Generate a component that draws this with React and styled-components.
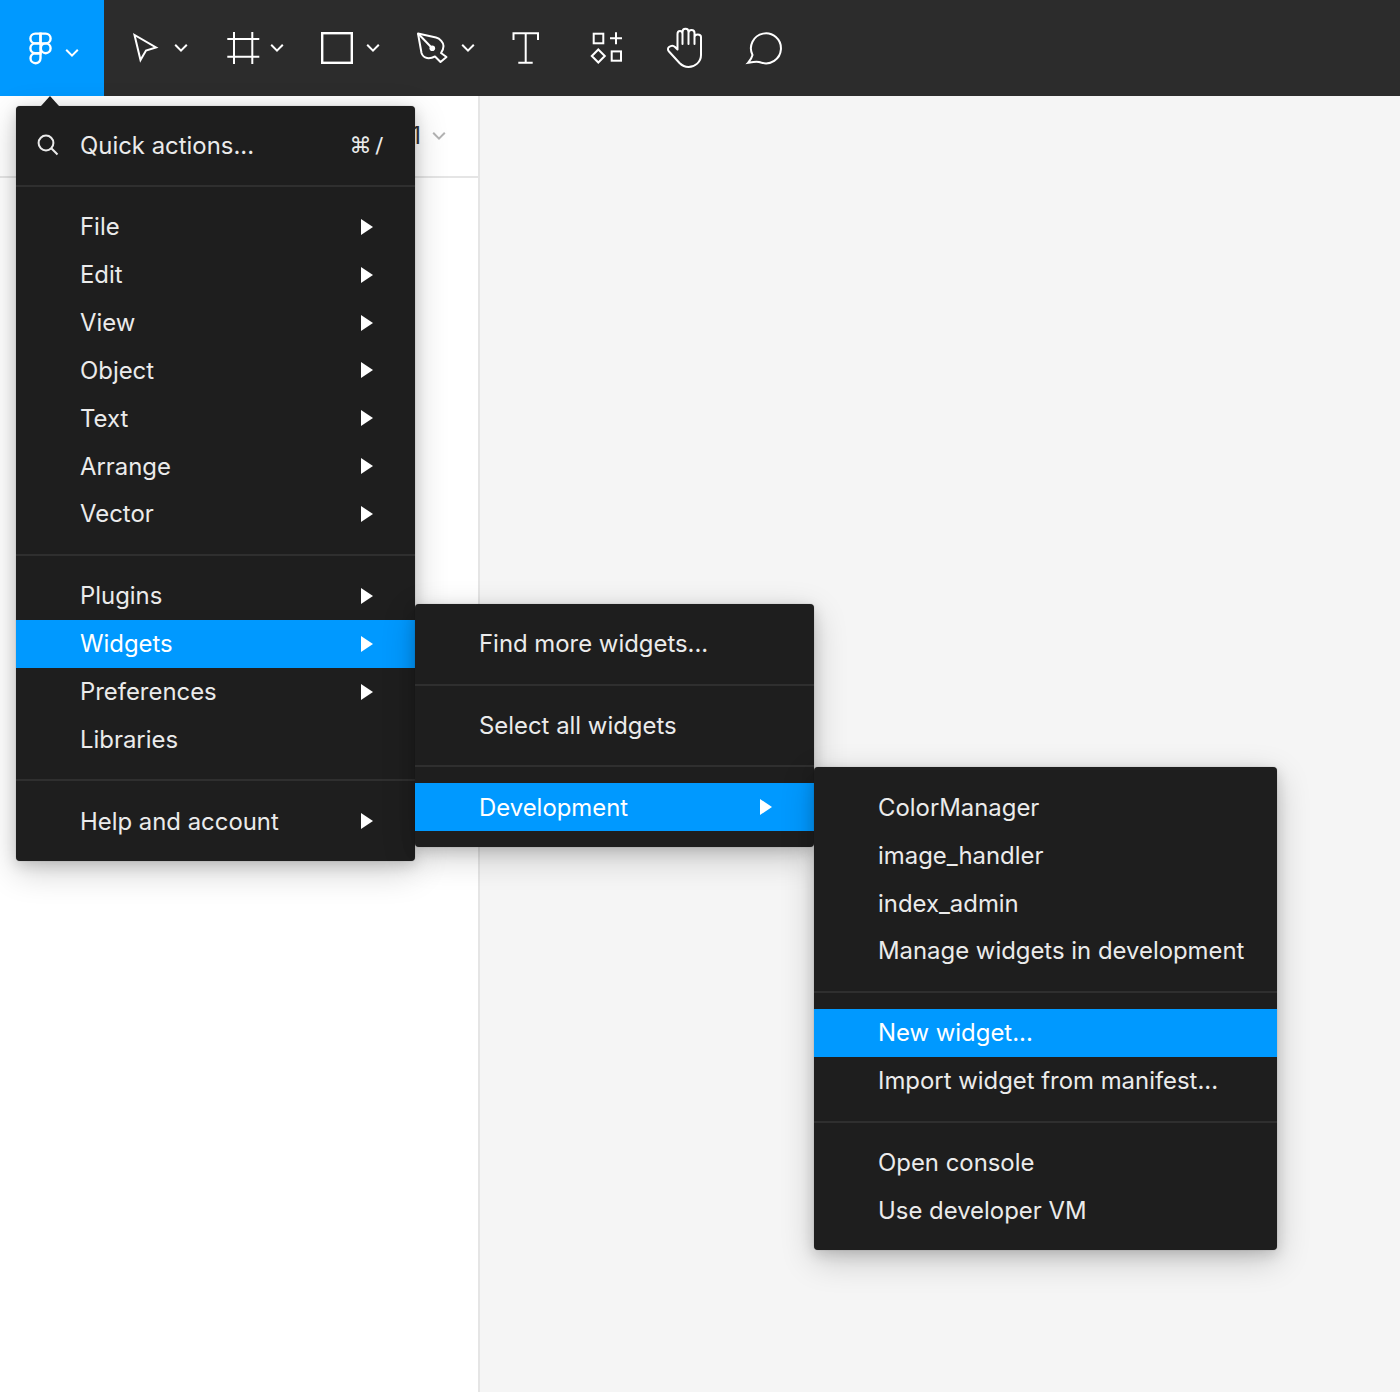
import React from "react";
import styled, { createGlobalStyle } from "styled-components";

const Global = createGlobalStyle`
  html, body { margin: 0; padding: 0; background: #fff; }
  body { font-family: Inter, "DejaVu Sans", sans-serif; -webkit-font-smoothing: antialiased; }
`;

const Page = styled.div`
  position: relative;
  width: 1400px;
  height: 1392px;
  overflow: hidden;
  display: flex;
  flex-direction: column;
`;

const Toolbar = styled.header`
  flex: none;
  height: 95.5px;
  background: #2c2c2c;
  display: flex;
  align-items: center;
`;

const MainButton = styled.div`
  width: 104px;
  height: 100%;
  padding-left: 16px;
  box-sizing: border-box;
  background: #0099ff;
  display: flex;
  align-items: center;
`;

const Tool = styled.div`
  width: ${(p) => (p.$group ? 96 : 80)}px;
  padding-left: 16px;
  box-sizing: border-box;
  display: flex;
  align-items: center;
`;

const ToolIcon = styled.svg`
  flex: none;
  width: 48px;
  height: 48px;
  fill: none;
  stroke: #fff;
  stroke-width: ${(p) => p.$stroke ?? 2};
`;

const ChevronIcon = styled.svg`
  flex: none;
  width: 16px;
  height: 16px;
  margin-left: ${(p) => p.$left ?? 5}px;
  margin-top: ${(p) => p.$top ?? 0}px;
  fill: none;
  stroke: ${(p) => p.$color ?? "#fff"};
  stroke-width: 2;
`;

const Workspace = styled.main`
  flex: 1;
  display: flex;
  min-height: 0;
`;

const SidePanel = styled.aside`
  flex: none;
  width: 478px;
  background: #fff;
  border-right: 2px solid #e5e5e5;
`;

const PanelHeader = styled.div`
  height: 82.5px;
  box-sizing: border-box;
  padding-right: 31px;
  border-bottom: 2px solid #e5e5e5;
  display: flex;
  align-items: center;
  justify-content: flex-end;
  color: #333;
  font-size: 24px;
`;

const Canvas = styled.div`
  flex: 1;
  background: #f5f5f5;
`;

const Menu = styled.div`
  position: absolute;
  width: ${(p) => p.$width}px;
  background: #1e1e1e;
  border-radius: 4px;
  color: #ebebeb;
  font-size: 23.9px;
  box-shadow: 0 4px 14px rgba(0, 0, 0, 0.15), 0 10px 34px rgba(0, 0, 0, 0.2), 0 0 1px rgba(0, 0, 0, 0.4);
`;

const MainMenu = styled(Menu)`
  left: 16px;
  top: 105.5px;
  &::before {
    content: "";
    position: absolute;
    left: 24.5px;
    top: -9.5px;
    border-left: 9.5px solid transparent;
    border-right: 9.5px solid transparent;
    border-bottom: 10px solid #1e1e1e;
  }
`;

const SubMenu = styled(Menu)`
  left: 100%;
  top: -16px;
  z-index: 1;
`;

const QuickRow = styled.div`
  height: 79.5px;
  padding: 0 32px 0 20px;
  display: flex;
  align-items: center;
`;

const SearchIcon = styled.svg`
  flex: none;
  width: 24px;
  height: 24px;
  margin-right: 20px;
  fill: none;
  stroke: #ebebeb;
  stroke-width: 2;
`;

const Shortcut = styled.span`
  margin-left: auto;
  font-family: "DejaVu Sans", Inter, sans-serif;
  font-size: 22px;
  word-spacing: -3px;
`;

const Section = styled.div`
  padding: 16px 0;
  border-top: ${(p) => (p.$first ? "none" : "2px solid #2f2f2f")};
`;

const Row = styled.div`
  position: relative;
  height: 47.85px;
  padding: 0 42px 0 64px;
  display: flex;
  align-items: center;
  justify-content: space-between;
  white-space: nowrap;
  background: ${(p) => (p.$active ? "#0099ff" : "transparent")};
  color: ${(p) => (p.$active ? "#fff" : "inherit")};
`;

const Arrow = styled.span`
  flex: none;
  width: 0;
  height: 0;
  border-left: 12px solid #fff;
  border-top: 8px solid transparent;
  border-bottom: 8px solid transparent;
`;

const Chevron = (props) => (
  <ChevronIcon viewBox="0 0 16 16" {...props}>
    <path d="M2.2 4.8 L8 10.6 L13.8 4.8" />
  </ChevronIcon>
);

const FigmaLogo = () => (
  <ToolIcon viewBox="0 0 48 48" $stroke={2.4}>
    <path d="M24.5 9.6 H19.3 a4.9 4.9 0 0 0 0 9.8 H24.5 Z" />
    <path d="M24.5 9.6 H29.7 a4.9 4.9 0 0 1 0 9.8 H24.5 Z" />
    <path d="M24.5 19.4 H19.3 a4.9 4.9 0 0 0 0 9.8 H24.5 Z" />
    <circle cx="29.7" cy="24.3" r="4.9" />
    <path d="M19.3 29.2 H24.5 V34.3 a5 5 0 1 1 -5.2 -5.1 Z" />
  </ToolIcon>
);

const MoveIcon = () => (
  <ToolIcon viewBox="0 0 48 48">
    <path d="M14.5 11 L20.5 36 L26 26.5 L36 23.5 Z" strokeLinejoin="miter" />
  </ToolIcon>
);

const FrameIcon = () => (
  <ToolIcon viewBox="0 0 48 48">
    <path d="M18 8 V40 M36.3 8 V40 M11.3 15 H43.3 M11.3 32.7 H43.3" />
  </ToolIcon>
);

const RectIcon = () => (
  <ToolIcon viewBox="0 0 48 48" $stroke={2.4}>
    <rect x="10.2" y="9.2" width="29.6" height="29.6" />
  </ToolIcon>
);

const PenIcon = () => (
  <ToolIcon viewBox="0 0 48 48">
    <path d="M10 9.5 L28 13.5 C32 14.5 35.5 18.5 35.5 22 C35.5 25 34.5 27 33 29 L38.5 33 L32.5 38 L27 32.5 C25 33.5 22 34.5 19 34 C16 33.5 14.5 32 13.5 29 Z" strokeLinejoin="round" />
    <path d="M10 9.5 L24 24" />
    <circle cx="24.3" cy="24.3" r="2.8" fill="#fff" stroke="none" />
  </ToolIcon>
);

const TextIcon = () => (
  <ToolIcon viewBox="0 0 48 48">
    <path d="M9.5 16 V9.3 H34 V16 M21.7 9.3 V38.7 M14.3 38.7 H28.7" />
  </ToolIcon>
);

const ComponentsIcon = () => (
  <ToolIcon viewBox="0 0 48 48">
    <rect x="9.7" y="9.7" width="9.6" height="9.6" />
    <path d="M32 8.3 V20.3 M26 14.3 H38" />
    <path d="M14.3 25.5 L20.8 32 L14.3 38.5 L7.8 32 Z" />
    <rect x="27.7" y="27.4" width="9.3" height="9.3" />
  </ToolIcon>
);

const HandIcon = () => (
  <ToolIcon viewBox="0 0 48 48" strokeLinejoin="round">
    <path d="M5 27.5 C3.5 26 3.7 24 5 23 C7 21.5 9.5 21.5 11 23 L13.5 25.5 V10 C13.5 6 18.5 6 18.5 10 V20 V8 C18.5 3.5 24.5 3.5 24.5 8 V20 V9 C24.5 5 30.5 5 30.5 9 V20 V13 C30.5 9.5 37 9.5 37 13 V31 C37 38 31 43 24.5 43 C20.5 43 18 41.5 15.5 39 Z" />
  </ToolIcon>
);

const CommentIcon = () => (
  <ToolIcon viewBox="0 0 48 48">
    <path d="M8.5 31 A15 15 0 1 1 17 38.5 C13 37 9 38 4 38.8 C6.5 36 8 33.5 8.5 31 Z" />
  </ToolIcon>
);

const Item = ({ label, arrow, active, children }) => (
  <Row $active={active}>
    <span>{label}</span>
    {arrow && <Arrow />}
    {children}
  </Row>
);

export default function App() {
  return (
    <>
      <Global />
      <Page>
        <Toolbar>
          <MainButton>
            <FigmaLogo />
            <Chevron $left={0} $top={11} />
          </MainButton>
          <Tool $group><MoveIcon /><Chevron /></Tool>
          <Tool $group><FrameIcon /><Chevron /></Tool>
          <Tool $group><RectIcon /><Chevron /></Tool>
          <Tool $group><PenIcon /><Chevron $left={4} /></Tool>
          <Tool><TextIcon /></Tool>
          <Tool><ComponentsIcon /></Tool>
          <Tool><HandIcon /></Tool>
          <Tool><CommentIcon /></Tool>
        </Toolbar>
        <Workspace>
          <SidePanel>
            <PanelHeader>
              <span>1</span>
              <Chevron $left={10} $top={1} $color="#b3b3b3" />
            </PanelHeader>
          </SidePanel>
          <Canvas />
        </Workspace>

        <MainMenu $width={399}>
          <QuickRow>
            <SearchIcon viewBox="0 0 24 24">
              <circle cx="10" cy="10" r="7.4" />
              <path d="M15.3 15.3 L21.5 21.5" />
            </SearchIcon>
            <span>Quick actions...</span>
            <Shortcut>⌘ /</Shortcut>
          </QuickRow>
          <Section>
            <Item label="File" arrow />
            <Item label="Edit" arrow />
            <Item label="View" arrow />
            <Item label="Object" arrow />
            <Item label="Text" arrow />
            <Item label="Arrange" arrow />
            <Item label="Vector" arrow />
          </Section>
          <Section>
            <Item label="Plugins" arrow />
            <Item label="Widgets" arrow active>
              <SubMenu $width={399}>
                <Section $first>
                  <Item label="Find more widgets..." />
                </Section>
                <Section>
                  <Item label="Select all widgets" />
                </Section>
                <Section>
                  <Item label="Development" arrow active>
                    <SubMenu $width={463}>
                      <Section $first>
                        <Item label="ColorManager" />
                        <Item label="image_handler" />
                        <Item label="index_admin" />
                        <Item label="Manage widgets in development" />
                      </Section>
                      <Section>
                        <Item label="New widget..." active />
                        <Item label="Import widget from manifest..." />
                      </Section>
                      <Section>
                        <Item label="Open console" />
                        <Item label="Use developer VM" />
                      </Section>
                    </SubMenu>
                  </Item>
                </Section>
              </SubMenu>
            </Item>
            <Item label="Preferences" arrow />
            <Item label="Libraries" />
          </Section>
          <Section>
            <Item label="Help and account" arrow />
          </Section>
        </MainMenu>
      </Page>
    </>
  );
}
